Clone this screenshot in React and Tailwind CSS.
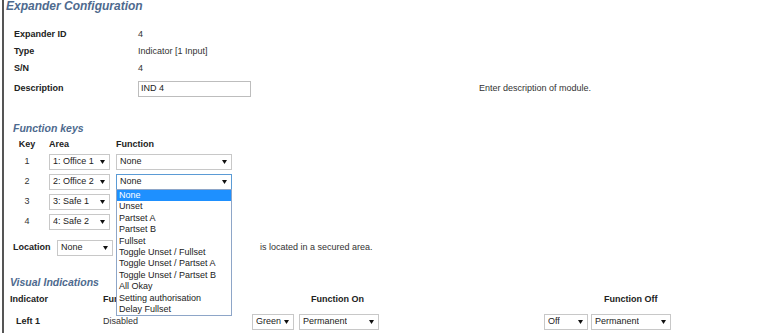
import React from 'react'

const Arrow = () => (
  <svg width="5" height="4" viewBox="0 0 5 4" className="shrink-0">
    <path d="M0 0 L5 0 L2.5 4 Z" fill="#111" />
  </svg>
)

const Select = ({ value, width, focused }) => (
  <div
    className={`h-[16px] flex items-center justify-between pl-[3px] pr-[4px] bg-white border ${
      focused ? 'border-[#5b9bd5]' : 'border-[#c8c8c8]'
    }`}
    style={{ width }}
  >
    <span className="truncate">{value}</span>
    <Arrow />
  </div>
)

const options = [
  'None',
  'Unset',
  'Partset A',
  'Partset B',
  'Fullset',
  'Toggle Unset / Fullset',
  'Toggle Unset / Partset A',
  'Toggle Unset / Partset B',
  'All Okay',
  'Setting authorisation',
  'Delay Fullset',
]

const keys = [
  { key: '1', area: '1: Office 1' },
  { key: '2', area: '2: Office 2', open: true },
  { key: '3', area: '3: Safe 1' },
  { key: '4', area: '4: Safe 2' },
]

const Heading = ({ children, className = '' }) => (
  <div className={`font-bold italic text-[#4e6a8e] ${className}`}>{children}</div>
)

export default function App() {
  return (
    <div
      className="w-[768px] h-[333px] overflow-hidden bg-white flex text-[9px] text-[#222]"
      style={{ fontFamily: '"Liberation Sans", Arial, sans-serif' }}
    >
      <div className="ml-[2px] w-[2px] h-full bg-[#555]" />
      <div className="flex-1 flex flex-col">
        <Heading className="ml-[2px] text-[12px] h-[13px] leading-[13px]">Expander Configuration</Heading>

        <div className="mt-[13px] ml-[10px] flex flex-col">
          <div className="h-[17px] flex items-center">
            <span className="w-[124px] font-bold">Expander ID</span>
            <span className="text-[#333]">4</span>
          </div>
          <div className="h-[17px] flex items-center">
            <span className="w-[124px] font-bold">Type</span>
            <span className="text-[#333]">Indicator [1 Input]</span>
          </div>
          <div className="h-[17px] flex items-center">
            <span className="w-[124px] font-bold">S/N</span>
            <span className="text-[#333]">4</span>
          </div>
          <div className="mt-[4px] h-[16px] flex items-center">
            <span className="w-[124px] font-bold">Description</span>
            <div className="w-[113px] h-[16px] border border-[#bdbdbd] pl-[2px] flex items-center">IND 4</div>
            <span className="ml-[228px] text-[#333]">Enter description of module.</span>
          </div>
        </div>

        <Heading className="mt-[24px] ml-[9px] text-[10.5px] h-[14px] leading-[14px]">Function keys</Heading>

        <div className="mt-[3px] ml-[10px] h-[14px] flex items-center font-bold">
          <span className="w-[26px] text-center">Key</span>
          <span className="ml-[9px] w-[67px]">Area</span>
          <span>Function</span>
        </div>

        <div className="mt-[2px] ml-[10px] flex flex-col gap-[4px]">
          {keys.map((k) => (
            <div key={k.key} className="h-[16px] flex items-center">
              <span className="w-[26px] text-center text-[#333]">{k.key}</span>
              <div className="ml-[9px]">
                <Select value={k.area} width={61} />
              </div>
              <div className="ml-[6px] relative">
                <Select value="None" width={116} focused={k.open} />
                {k.open && (
                  <div className="absolute left-0 top-[15px] w-[116px] bg-white border border-[#8ea6c8] z-10">
                    {options.map((o, i) => (
                      <div
                        key={o}
                        className={`h-[11.4px] leading-[11.4px] pl-[2px] whitespace-nowrap ${
                          i === 0 ? 'bg-[#1e90ff] text-white' : 'text-[#222]'
                        }`}
                      >
                        {o}
                      </div>
                    ))}
                  </div>
                )}
              </div>
            </div>
          ))}
        </div>

        <div className="mt-[10px] ml-[9px] h-[16px] flex items-center">
          <span className="w-[44px] font-bold">Location</span>
          <Select value="None" width={56} />
          <span className="ml-[147px] text-[#333]">is located in a secured area.</span>
        </div>

        <Heading className="mt-[19px] ml-[6px] text-[10.5px] h-[14px] leading-[14px]">Visual Indications</Heading>

        <div className="mt-[4px] ml-[6px] h-[14px] flex items-center font-bold">
          <span className="w-[93px]">Indicator</span>
          <span className="w-[208px]">Function</span>
          <span className="w-[293px]">Function On</span>
          <span>Function Off</span>
        </div>

        <div className="mt-[7px] ml-[12px] h-[16px] flex items-center">
          <span className="w-[87px] font-bold">Left 1</span>
          <span className="w-[149px] text-[#333]">Disabled</span>
          <Select value="Green" width={42} />
          <div className="ml-[5px]">
            <Select value="Permanent" width={80} />
          </div>
          <div className="ml-[165px]">
            <Select value="Off" width={44} />
          </div>
          <div className="ml-[3px]">
            <Select value="Permanent" width={80} />
          </div>
        </div>
      </div>
    </div>
  )
}
